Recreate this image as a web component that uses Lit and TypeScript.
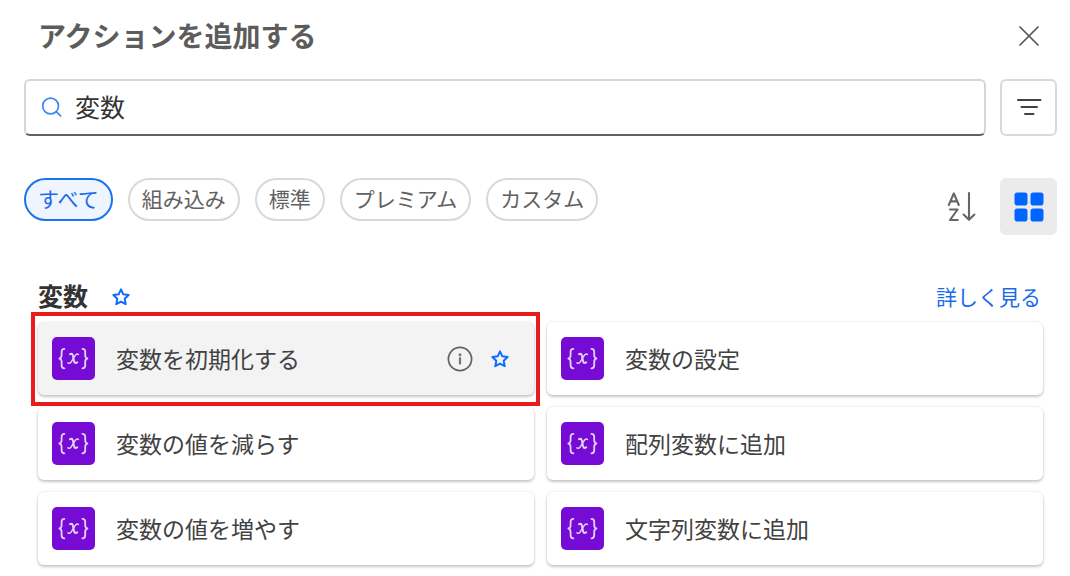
import { LitElement, html, css } from "lit";
import { customElement, property, state } from "lit/decorators.js";

const starIcon = html`<svg width="20" height="20" viewBox="0 0 20 20" fill="none" stroke="#0f6cff" stroke-width="2" stroke-linejoin="round" aria-hidden="true">
  <path d="M10 2.4 L12.3 7.3 L17.6 8 L13.7 11.8 L14.7 17.2 L10 14.6 L5.3 17.2 L6.3 11.8 L2.4 8 L7.7 7.3 Z" />
</svg>`;

@customElement("action-card")
export class ActionCard extends LitElement {
  @property() label = "";
  @property({ type: Boolean, reflect: true }) active = false;

  static styles = css`
    :host { display: block; position: relative; min-width: 0; }
    .card {
      display: flex; align-items: center; box-sizing: border-box;
      min-height: 73px; padding: 15px 24px 15px 14px;
      border-radius: 6px; background: #fff;
      box-shadow: 0 2px 3px rgba(0, 0, 0, 0.2), 0 0 3px rgba(0, 0, 0, 0.11);
    }
    .card.active { background: #f3f3f3; }
    button {
      border: 0; padding: 0; margin: 0; background: none; cursor: pointer;
      font: inherit; color: inherit; display: flex; align-items: center;
    }
    .main { flex: 1; gap: 21px; min-width: 0; text-align: left; font-size: 23px; line-height: 34px; color: #424242; }
    .label { padding-bottom: 2px; }
    .tools { display: flex; align-items: center; gap: 17px; }
    .icon { flex: none; }
    .outline {
      position: absolute; inset: -10px -6px -11px -7px;
      border: 4px solid #e81c1c; pointer-events: none;
    }
    svg { display: block; }
  `;

  render() {
    return html`
      <div class="card ${this.active ? "active" : ""}">
        <button class="main" type="button">
          <svg class="icon" width="43" height="43" viewBox="0 0 43 43" aria-hidden="true">
            <rect width="43" height="43" rx="5" fill="#770bd6" />
            <g fill="none" stroke="#e3d0f6" stroke-linecap="round" stroke-linejoin="round">
              <path stroke-width="1.8" d="M12.4 11.8 C10 11.8 9.6 12.8 9.6 14.7 V17.9 C9.6 20 9 21.2 7.4 21.5 C9 21.8 9.6 23 9.6 25.1 V28.3 C9.6 30.4 10 31.3 12.4 31.3" />
              <path stroke-width="1.8" d="M30.4 11.8 C32.8 11.8 33.2 12.8 33.2 14.7 V17.9 C33.2 20 33.8 21.2 35.4 21.5 C33.8 21.8 33.2 23 33.2 25.1 V28.3 C33.2 30.4 32.8 31.3 30.4 31.3" />
              <path stroke-width="2" d="M18 17.2 C20.6 16 20.9 18 21.4 21.2 C22 24.8 22.6 27.2 25.2 25.4" />
              <path stroke-width="1.5" d="M26.4 17.4 C24.2 15.8 22.6 19.4 21.4 21.4 C19.8 24.2 18.2 27.4 16 25.8" />
            </g>
          </svg>
          <span class="label">${this.label}</span>
        </button>
        ${this.active
          ? html`<div class="tools">
              <button type="button" aria-label="情報">
                <svg width="26" height="26" viewBox="0 0 26 26" aria-hidden="true">
                  <circle cx="13" cy="13" r="11.6" fill="none" stroke="#616161" stroke-width="1.7" />
                  <circle cx="13" cy="8.8" r="1.5" fill="#757575" />
                  <path d="M13 12 V17.6" stroke="#757575" stroke-width="2.2" stroke-linecap="round" />
                </svg>
              </button>
              <button type="button" aria-label="お気に入り">${starIcon}</button>
            </div>`
          : null}
      </div>
      ${this.active ? html`<div class="outline"></div>` : null}
    `;
  }
}

@customElement("app-root")
export class AppRoot extends LitElement {
  @state() private filter = "すべて";
  private filters = ["すべて", "組み込み", "標準", "プレミアム", "カスタム"];
  private actions = [
    "変数を初期化する", "変数の設定",
    "変数の値を減らす", "配列変数に追加",
    "変数の値を増やす", "文字列変数に追加",
  ];

  static styles = css`
    :host {
      display: block; box-sizing: border-box; min-height: 100vh;
      padding: 14px 13px 10px 24px; background: #fff; color: #242424;
      font-family: "Noto Sans CJK JP", sans-serif;
    }
    button { margin: 0; padding: 0; border: 0; background: none; font: inherit; color: inherit; cursor: pointer; }
    svg { display: block; }
    h1, h2 { margin: 0; font-weight: 700; }
    header { display: flex; align-items: center; justify-content: space-between; padding: 0 14px; }
    h1 { font-size: 28px; line-height: 42px; padding-bottom: 2px; color: #5c5c5c; }
    .close { padding: 4px; }
    .search-row { display: flex; gap: 14px; margin-top: 21px; }
    .search {
      flex: 1; min-width: 0; box-sizing: border-box; height: 57px; display: flex; align-items: center;
      gap: 12px; padding: 0 15px 2px; border: 2px solid #d6d6d6; border-bottom-color: #616161; border-radius: 6px;
    }
    .search input {
      flex: 1; min-width: 0; border: 0; outline: 0; padding: 0 0 2px; background: none;
      font: inherit; font-size: 25px; line-height: 36px; color: #333;
    }
    .square { width: 57px; height: 57px; flex: none; display: grid; place-items: center; box-sizing: border-box; border-radius: 6px; }
    .square.bordered { border: 2px solid #d9d9d9; padding-bottom: 2px; }
    .square.on { background: #ebebeb; }
    .filter-row { display: flex; justify-content: space-between; align-items: flex-start; margin-top: 42px; }
    .chips { display: flex; flex-wrap: wrap; gap: 15px; }
    .chip {
      box-sizing: border-box; height: 43px; padding: 0 12px 4px; border: 2px solid #d9d9d9; border-radius: 22px;
      font-size: 21px; line-height: 34px; color: #616161;
    }
    .chip.selected { border-color: #1a73f0; background: #eff5ff; color: #1a6bea; }
    .view { display: flex; align-items: center; gap: 10px; }
    .group { padding: 0 14px; margin-top: 42px; }
    .group-head { display: flex; align-items: center; gap: 23px; }
    h2 { font-size: 25px; line-height: 36px; padding-bottom: 4px; color: #333; }
    .more { margin-left: auto; padding: 0 2px 2px 0; font-size: 21px; line-height: 36px; color: #1a6bea; text-decoration: none; }
    .grid { display: grid; grid-template-columns: 1fr 1fr; gap: 12px 13px; margin-top: 5px; }
  `;

  render() {
    return html`
      <header>
        <h1>アクションを追加する</h1>
        <button class="close" type="button" aria-label="閉じる">
          <svg width="20" height="20" viewBox="0 0 20 20" stroke="#555" stroke-width="1.7" stroke-linecap="round" aria-hidden="true">
            <path d="M1 1 L19 19 M19 1 L1 19" />
          </svg>
        </button>
      </header>
      <div class="search-row">
        <label class="search">
          <svg width="22" height="22" viewBox="0 0 22 22" fill="none" stroke="#3b86f7" stroke-width="1.7" stroke-linecap="round" aria-hidden="true">
            <circle cx="9.6" cy="10" r="7.9" />
            <path d="M15.2 15.6 L19.6 19.8" />
          </svg>
          <input type="text" aria-label="検索" .value=${"変数"} />
        </label>
        <button class="square bordered" type="button" aria-label="フィルター">
          <svg width="26" height="18" viewBox="0 0 26 18" stroke="#424242" stroke-width="2" stroke-linecap="round" aria-hidden="true">
            <path d="M2 2 H24.5 M5.5 9 H21 M9 16 H17.5" />
          </svg>
        </button>
      </div>
      <div class="filter-row">
        <div class="chips">
          ${this.filters.map(
            (f) => html`<button type="button" class="chip ${f === this.filter ? "selected" : ""}"
              aria-pressed=${f === this.filter} @click=${() => (this.filter = f)}>${f}</button>`
          )}
        </div>
        <div class="view">
          <button class="square" type="button" aria-label="並べ替え">
            <svg width="30" height="32" viewBox="0 0 30 32" fill="none" stroke="#666" stroke-width="2.1" stroke-linecap="round" stroke-linejoin="round" aria-hidden="true">
              <path d="M1.8 14 L6.8 2.4 L11.8 14 M3.6 10.4 H10" />
              <path d="M3 18.5 H10.6 L3 29 H10.8" />
              <path d="M22 2 V28.6 M16.6 23.6 L22 28.8 L27.4 23.6" />
            </svg>
          </button>
          <button class="square on" type="button" aria-label="グリッド表示">
            <svg width="30" height="30" viewBox="0 0 30 30" fill="#0066ff" aria-hidden="true">
              <rect x="0.5" y="0.5" width="13" height="13" rx="2.8" />
              <rect x="16.5" y="0.5" width="13" height="13" rx="2.8" />
              <rect x="0.5" y="16.5" width="13" height="13" rx="2.8" />
              <rect x="16.5" y="16.5" width="13" height="13" rx="2.8" />
            </svg>
          </button>
        </div>
      </div>
      <section class="group">
        <div class="group-head">
          <h2>変数</h2>
          <button type="button" aria-label="お気に入り">${starIcon}</button>
          <a class="more" href="#">詳しく見る</a>
        </div>
        <div class="grid">
          ${this.actions.map((a, i) => html`<action-card .label=${a} ?active=${i === 0}></action-card>`)}
        </div>
      </section>
    `;
  }
}
